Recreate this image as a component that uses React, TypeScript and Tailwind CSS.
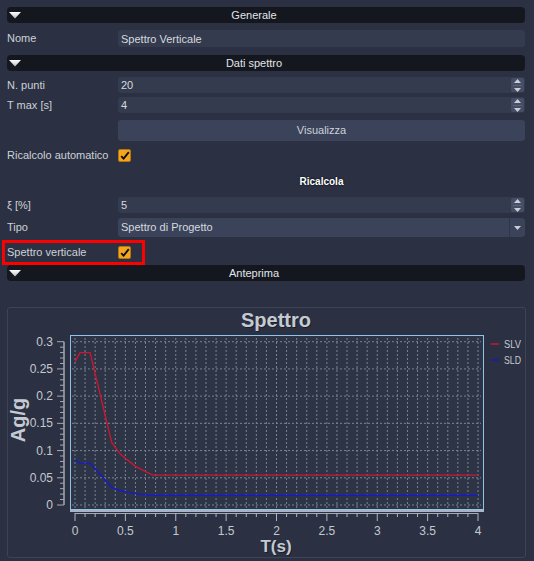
import React from "react";

const FONT = { fontFamily: '"Liberation Sans", Arial, sans-serif' };

function Tri() {
  return (
    <svg width="13" height="7" viewBox="0 0 13 7" className="shrink-0">
      <defs>
        <linearGradient id="tg" x1="0" y1="0" x2="0" y2="1">
          <stop offset="0" stopColor="#ffffff" />
          <stop offset="1" stopColor="#b8bcc4" />
        </linearGradient>
      </defs>
      <polygon points="0,0 12,0 6,6.5" fill="url(#tg)" />
    </svg>
  );
}

function Header({ title }: { title: string }) {
  return (
    <div className="relative h-[16px] rounded-[4px] bg-[#14171e] flex items-center">
      <div className="absolute left-[2px] top-[5px]">
        <Tri />
      </div>
      <div className="flex-1 pr-[24px] text-center text-[11px] text-[#e2e5ea] leading-none">{title}</div>
    </div>
  );
}

function Spin() {
  return (
    <div className="w-[13px] h-[14px] mr-[1px] rounded-[2px] bg-[#454e64] flex flex-col items-center justify-center gap-[2px]">
      <svg width="7" height="4" viewBox="0 0 7 4">
        <polygon points="0,4 7,4 3.5,0" fill="#c8cdd6" />
      </svg>
      <div className="w-[9px] h-px bg-[#5b647a]" />
      <svg width="7" height="4" viewBox="0 0 7 4">
        <polygon points="0,0 7,0 3.5,4" fill="#c8cdd6" />
      </svg>
    </div>
  );
}

function Check() {
  return (
    <div className="w-[13px] h-[13px] rounded-[2px] bg-[#f2a51f] border border-[#b9740c] flex items-center justify-center">
      <svg width="10" height="9" viewBox="0 0 10 9">
        <path d="M1.2 5.2 L3.6 7.6 L8.8 1.2" stroke="#0d0d0d" strokeWidth="1.9" fill="none" />
      </svg>
    </div>
  );
}

function Field({ value, spin, h }: { value: string; spin?: boolean; h: string }) {
  return (
    <div className={`flex-1 ${h} rounded-[3px] bg-[#343b4e] flex items-center pl-[3px]`}>
      <span className="flex-1 text-[11px] text-[#d6d9df] leading-none pt-[1px]">{value}</span>
      {spin && <Spin />}
    </div>
  );
}

function Label({ text }: { text: string }) {
  return <div className="w-[111px] shrink-0 text-[11px] text-[#cdd1d8] leading-none">{text}</div>;
}

const X = (t: number) => 75 + t * 100.75;
const Y = (v: number) => 505 - v * 544.33;

const slv: [number, number][] = [
  [0, 0.263],
  [0.05, 0.28],
  [0.15, 0.28],
  [0.364, 0.115],
  [0.45, 0.0935],
  [0.6, 0.071],
  [0.77, 0.055],
  [4, 0.055],
];
const sld: [number, number][] = [
  [0, 0.083],
  [0.05, 0.077],
  [0.15, 0.077],
  [0.364, 0.0325],
  [0.45, 0.026],
  [0.6, 0.021],
  [0.72, 0.018],
  [4, 0.018],
];

const pts = (a: [number, number][]) => a.map(([t, v]) => `${X(t).toFixed(1)},${Y(v).toFixed(1)}`).join(" ");

function Chart() {
  const vgrid = Array.from({ length: 41 }, (_, i) => i / 10);
  const hvals = [0, 0.05, 0.1, 0.15, 0.2, 0.25, 0.3];
  const hlabels = ["0", "0.05", "0.1", "0.15", "0.2", "0.25", "0.3"];
  const xlab = ["0", "0.5", "1", "1.5", "2", "2.5", "3", "3.5", "4"];
  const yminor = Array.from({ length: 31 }, (_, i) => i / 100);
  return (
    <svg width="517" height="249" viewBox="8 308 517 249" style={FONT}>
      <text x="277" y="328" textAnchor="middle" fontSize="20" fontWeight="bold" fill="#1b1f28">
        Spettro
      </text>
      <text x="276" y="327" textAnchor="middle" fontSize="20" fontWeight="bold" fill="#c6cad2">
        Spettro
      </text>
      <rect x="70.5" y="335.5" width="413" height="174" fill="#2d3446" stroke="#8ec3ea" strokeWidth="1" />
      <line x1="70" y1="511" x2="484" y2="511" stroke="#aab4c2" strokeWidth="2" />
      {vgrid.map((t) => (
        <line key={"v" + t} x1={X(t)} y1="338" x2={X(t)} y2="508" stroke="#7b8292" strokeWidth="1" strokeDasharray="2 2" />
      ))}
      {hvals.map((v) => (
        <line key={"h" + v} x1="72" y1={Y(v)} x2="481" y2={Y(v)} stroke="#7b8292" strokeWidth="1" strokeDasharray="2 2" />
      ))}
      <polyline points={pts(slv)} fill="none" stroke="#cc1530" strokeWidth="1.4" />
      <polyline points={pts(sld)} fill="none" stroke="#1a1ac4" strokeWidth="1.4" />
      {/* y axis */}
      <line x1="64" y1={Y(0.3)} x2="64" y2={Y(0)} stroke="#a3a9b3" strokeWidth="1.5" />
      {yminor.map((v) => (
        <line
          key={"ym" + v}
          x1={Math.round(v * 100) % 5 === 0 ? 57 : 60}
          y1={Y(v)}
          x2="64"
          y2={Y(v)}
          stroke="#a3a9b3"
          strokeWidth="1"
        />
      ))}
      {hvals.map((v, i) => (
        <text key={"hl" + v} x="53" y={Y(v) + 4} textAnchor="end" fontSize="12" fill="#c4c9d1">
          {hlabels[i]}
        </text>
      ))}
      {/* x axis */}
      <line x1={X(0)} y1="513.5" x2={X(4)} y2="513.5" stroke="#a3a9b3" strokeWidth="1" />
      {vgrid.map((t, i) => (
        <line key={"xt" + t} x1={X(t)} y1="513" x2={X(t)} y2={i % 5 === 0 ? 521 : 517} stroke="#b0b6bf" strokeWidth="1" />
      ))}
      {xlab.map((l, i) => (
        <text key={"xl" + l} x={X(i * 0.5)} y="535" textAnchor="middle" fontSize="12" fill="#c4c9d1">
          {l}
        </text>
      ))}
      <text x="277" y="553" textAnchor="middle" fontSize="17" fontWeight="bold" fill="#1b1f28">
        T(s)
      </text>
      <text x="276" y="552" textAnchor="middle" fontSize="17" fontWeight="bold" fill="#c6cad2">
        T(s)
      </text>
      <text
        x="18"
        y="427"
        transform="rotate(-90 18 420)"
        textAnchor="middle"
        fontSize="20"
        fontWeight="bold"
        fill="#c6cad2"
      >
        Ag/g
      </text>
      {/* legend */}
      <line x1="491" y1="344" x2="499" y2="344" stroke="#cc1530" strokeWidth="1.5" />
      <text x="504" y="348" fontSize="11" fill="#c4c9d1" textLength="17" lengthAdjust="spacingAndGlyphs">
        SLV
      </text>
      <line x1="491" y1="360" x2="499" y2="360" stroke="#1a1ac4" strokeWidth="1.5" />
      <text x="504" y="364" fontSize="11" fill="#c4c9d1" textLength="17" lengthAdjust="spacingAndGlyphs">
        SLD
      </text>
    </svg>
  );
}

export default function App() {
  return (
    <div className="w-[534px] h-[561px] overflow-hidden bg-[#2b3142] flex flex-col pt-[7px] pl-[7px] pr-[9px]" style={FONT}>
      <Header title="Generale" />
      <div className="mt-[7px] flex items-center">
        <Label text="Nome" />
        <Field value="Spettro Verticale" h="h-[17px]" />
      </div>
      <div className="mt-[8px]">
        <Header title="Dati spettro" />
      </div>
      <div className="mt-[6px] flex items-center">
        <Label text="N. punti" />
        <Field value="20" spin h="h-[16px]" />
      </div>
      <div className="mt-[4px] flex items-center">
        <Label text="T max [s]" />
        <Field value="4" spin h="h-[16px]" />
      </div>
      <div className="mt-[7px] flex">
        <div className="w-[111px] shrink-0" />
        <div className="flex-1 h-[21px] rounded-[3px] bg-[#3a435a] flex items-center justify-center text-[11px] text-[#cdd1d8] leading-none">
          Visualizza
        </div>
      </div>
      <div className="mt-[7px] flex items-center h-[15px]">
        <Label text="Ricalcolo automatico" />
        <Check />
      </div>
      <div className="mt-[11px] flex items-center h-[16px]">
        <div className="w-[111px] shrink-0" />
        <div className="flex-1 text-center text-[10px] font-bold text-white leading-none [text-shadow:0_0_2px_#000]">
          Ricalcola
        </div>
      </div>
      <div className="mt-[7px] flex items-center">
        <Label text="ξ [%]" />
        <Field value="5" spin h="h-[16px]" />
      </div>
      <div className="mt-[5px] flex items-center">
        <Label text="Tipo" />
        <div className="flex-1 h-[19px] rounded-[3px] bg-[#3a435a] flex items-center pl-[3px]">
          <span className="flex-1 text-[11px] text-[#d6d9df] leading-none">Spettro di Progetto</span>
          <div className="w-px h-[19px] bg-[#2f3649]" />
          <div className="w-[15px] flex items-center justify-center">
            <svg width="7" height="4" viewBox="0 0 7 4">
              <polygon points="0,0 7,0 3.5,4" fill="#c8cdd6" />
            </svg>
          </div>
        </div>
      </div>
      <div className="mt-[3px] -ml-[5px] w-[143px] h-[25px] border-[3px] border-[#ff0000] flex items-center pl-[2px]">
        <div className="w-[111px] shrink-0 text-[11px] text-[#cdd1d8] leading-none">Spettro verticale</div>
        <Check />
      </div>
      <div className="mt-0">
        <Header title="Anteprima" />
      </div>
      <div className="mt-[26px] w-[519px] h-[251px] rounded-[3px] border border-[#3d4455] overflow-hidden">
        <Chart />
      </div>
    </div>
  );
}
